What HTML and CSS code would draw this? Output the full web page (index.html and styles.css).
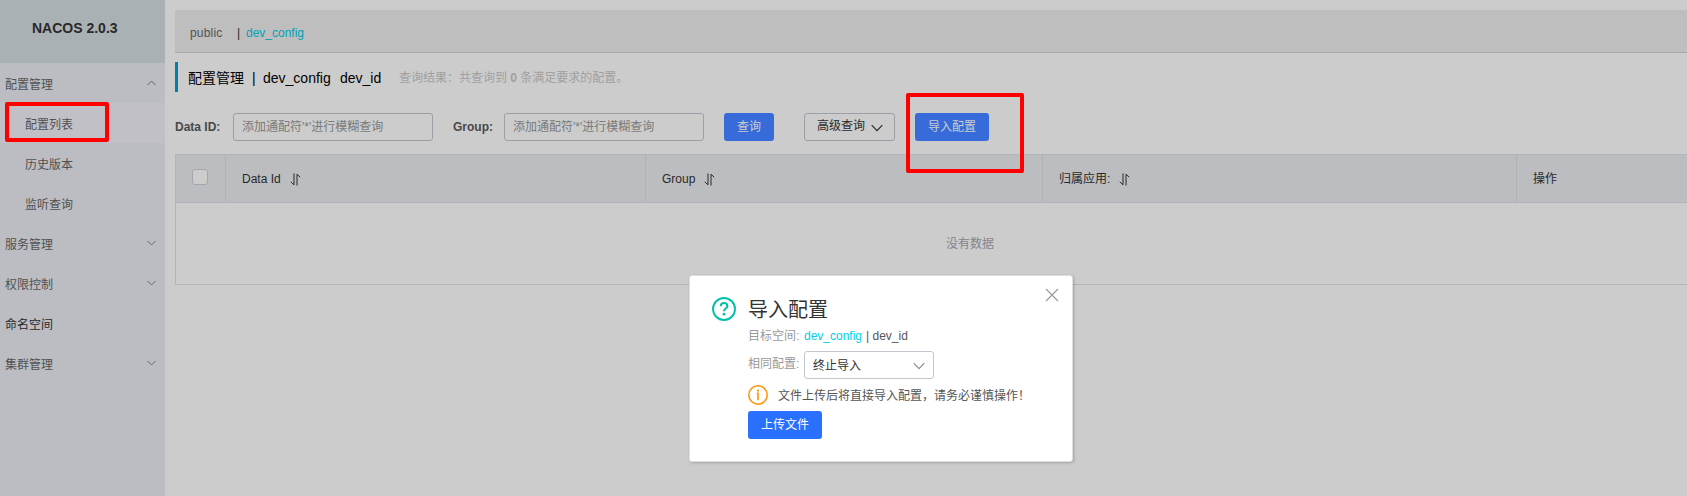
FILE: index.html
```html
<!DOCTYPE html>
<html lang="zh-CN">
<head>
<meta charset="utf-8">
<title>Nacos</title>
<link rel="stylesheet" href="styles.css">
</head>
<body>
<svg class="defs" width="0" height="0">
  <symbol id="chevron" viewBox="0 0 12 7"><path d="M0.7 0.7 6 6.1 11.3 0.7" fill="none" stroke="currentColor" stroke-width="1.2"/></symbol>
  <symbol id="sort" viewBox="0 0 11 13"><path d="M4 0.5V11.8L0.8 8.8M7 12.5V1.2L10.2 4.2" fill="none" stroke="currentColor" stroke-width="1"/></symbol>
</svg>
<div class="app">
  <aside class="sidebar">
    <h1 class="brand">NACOS 2.0.3</h1>
    <nav class="menu">
      <div class="item">配置管理<svg class="arrow up"><use href="#chevron"/></svg></div>
      <div class="item sub active">配置列表<span class="mark mark-list"></span></div>
      <div class="item sub">历史版本</div>
      <div class="item sub">监听查询</div>
      <div class="item">服务管理<svg class="arrow"><use href="#chevron"/></svg></div>
      <div class="item">权限控制<svg class="arrow"><use href="#chevron"/></svg></div>
      <div class="item strong">命名空间</div>
      <div class="item">集群管理<svg class="arrow"><use href="#chevron"/></svg></div>
    </nav>
  </aside>
  <main class="main">
    <div class="spaces"><span class="public">public</span><span class="bar">|</span><span class="link">dev_config</span></div>
    <div class="title"><span class="t-name">配置管理</span><span class="t-bar">|</span><span class="t-space">dev_config</span><span class="t-id">dev_id</span><span class="result">查询结果：共查询到 <b>0</b> 条满足要求的配置。</span></div>
    <div class="form">
      <label class="label l-data">Data ID:</label>
      <div class="input">添加通配符'*'进行模糊查询</div>
      <label class="label l-group">Group:</label>
      <div class="input">添加通配符'*'进行模糊查询</div>
      <div class="btn primary search">查询</div>
      <div class="btn normal">高级查询<svg class="btn-arrow"><use href="#chevron"/></svg></div>
      <div class="btn primary import">导入配置<span class="mark mark-import"></span></div>
    </div>
    <div class="table">
      <div class="thead">
        <div class="th check"><span class="checkbox"></span></div>
        <div class="th">Data Id<svg class="sort"><use href="#sort"/></svg></div>
        <div class="th">Group<svg class="sort"><use href="#sort"/></svg></div>
        <div class="th">归属应用:<svg class="sort"><use href="#sort"/></svg></div>
        <div class="th">操作</div>
      </div>
      <div class="empty">没有数据</div>
    </div>
  </main>
</div>
<section class="dialog">
  <svg class="close" viewBox="0 0 14 14"><path d="M1 1 13 13M13 1 1 13" stroke="#999" stroke-width="1.1"/></svg>
  <svg class="help" viewBox="0 0 24 24" fill="none" stroke="#00c1a8"><circle cx="12" cy="12" r="11" stroke-width="1.9"/><path d="M8.7 9.2C8.8 7 10.1 6 12 6c2 0 3.4 1.2 3.4 3 0 2.4-3.4 2.6-3.4 5.2" stroke-width="2"/><circle cx="12" cy="17.2" r="1.4" fill="#00c1a8" stroke="none"/></svg>
  <div class="body">
    <h2 class="heading">导入配置</h2>
    <div class="row target"><span class="key">目标空间:</span><span class="space">dev_config</span><span class="id">| dev_id</span></div>
    <div class="row policy"><span class="key">相同配置:</span><div class="select">终止导入<svg class="sel-arrow"><use href="#chevron"/></svg></div></div>
    <div class="row notice"><svg class="info" viewBox="0 0 20 20"><circle cx="10" cy="10" r="9.2" fill="none" stroke="#ff9300" stroke-width="1.5"/><circle cx="10" cy="5.7" r="1.1" fill="#ff9300"/><path d="M8.8 8.4H10V15.2" fill="none" stroke="#ff9300" stroke-width="1.6"/></svg><span>文件上传后将直接导入配置，请务必谨慎操作！</span></div>
    <div class="btn upload">上传文件</div>
  </div>
</section>
</body>
</html>
```
FILE: styles.css
```css
* { box-sizing: border-box; }
body {
  margin: 0;
  height: 496px;
  overflow: hidden;
  background: #ccc;
  color: #292929;
  font: 12px/18px "Liberation Sans", "Noto Sans CJK SC", sans-serif;
}
.defs { position: absolute; }
.app { display: flex; height: 496px; }

.sidebar { width: 165px; flex: none; background: #bbbdc2; }
.brand {
  margin: 0;
  height: 63px;
  padding: 19px 0 0 32px;
  background: #aab1b5;
  font-size: 14px;
  font-weight: bold;
  white-space: nowrap;
}
.item {
  position: relative;
  display: flex;
  align-items: center;
  justify-content: space-between;
  height: 40px;
  padding: 4px 9px 0 5px;
  color: #515151;
}
.item.sub { padding-left: 25px; }
.item.active { background: #c1c0c7; }
.item.strong { color: #292929; }
.arrow { width: 9px; height: 6px; margin: -5px 0 0; color: #5c5c5c; }
.arrow.up { transform: scaleY(-1); }
.mark { position: absolute; border: 4px solid #f00; border-radius: 2px; }
.mark-list { left: 5px; top: -1px; width: 104px; height: 40px; }
.mark-import { left: -9px; top: -20px; width: 118px; height: 80px; }

.main { width: 1590px; flex: none; margin-left: 10px; padding-top: 10px; }
.spaces {
  display: flex;
  height: 43px;
  padding: 14px 0 0 15px;
  background: #bebebe;
  border-bottom: 1px solid #a8a8a8;
}
.public { width: 47px; color: #525252; letter-spacing: 0.2px; }
.bar { width: 9px; }
.link { color: #00a2b6; }
.title {
  display: flex;
  height: 30px;
  margin-top: 9px;
  border-left: 3px solid #0080a9;
  padding-left: 10px;
  color: #000;
  font-size: 14px;
  line-height: 33px;
  white-space: nowrap;
}
.t-name { width: 64px; }
.t-bar { width: 11px; }
.t-space { width: 77px; }
.t-id { width: 59px; }
.result { color: #a0a0a0; font-size: 12px; }

.form { display: flex; height: 28px; margin-top: 21px; line-height: 28px; white-space: nowrap; }
.label { flex: none; color: #484848; font-weight: bold; }
.l-data { width: 58px; }
.l-group { width: 51px; margin-left: 20px; }
.input {
  width: 200px;
  height: 28px;
  padding-left: 8px;
  border: 1px solid #9d9fa8;
  border-radius: 3px;
  color: #7a7a7a;
  line-height: 26px;
}
.btn { position: relative; height: 28px; border-radius: 3px; text-align: center; white-space: nowrap; }
.primary { background: #376bd9; color: #ccc; }
.search { width: 50px; margin-left: 20px; }
.normal {
  display: flex;
  gap: 6px;
  width: 91px;
  margin-left: 30px;
  padding-left: 12px;
  border: 1px solid #9d9fa8;
  line-height: 24px;
}
.btn-arrow { width: 12px; height: 8px; margin-top: 10px; }
.import { width: 74px; margin-left: 20px; }

.table { height: 131px; margin-top: 13px; border: 1px solid #b3b5b9; }
.thead {
  display: grid;
  grid-template-columns: 50px 420px 397px 474px 1fr;
  height: 48px;
  background: #bbbdc1;
  border-bottom: 1px solid #b0b2b6;
}
.th { display: flex; align-items: center; padding: 1px 0 0 16px; border-right: 1px solid #b0b2b6; }
.checkbox { width: 16px; height: 16px; margin-top: -4px; border: 1px solid #a3a5ad; border-radius: 3px; background: #ccc; }
.sort { width: 11px; height: 13px; margin-left: 9px; }
.empty { padding-top: 32px; text-align: center; color: #84858c; }

.dialog {
  position: absolute;
  left: 689px;
  top: 275px;
  width: 384px;
  height: 187px;
  padding: 20px 0 0 22px;
  display: flex;
  background: #fff;
  border: 1px solid #dcdee3;
  border-radius: 3px;
  box-shadow: 1px 1px 3px rgba(0,0,0,.2);
  white-space: nowrap;
}
.close { position: absolute; left: 355px; top: 12px; width: 14px; height: 14px; }
.help { width: 24px; height: 24px; margin-top: 1px; }
.body { margin-left: 12px; }
.heading { height: 27px; margin: 0; color: #333; font-size: 20px; font-weight: normal; line-height: 29px; }
.row { display: flex; }
.target { height: 28px; line-height: 26px; }
.key { width: 56px; color: #999; }
.space { width: 62px; color: #00d0e6; }
.id { color: #555; }
.policy .key { line-height: 27px; }
.select {
  display: flex;
  justify-content: space-between;
  width: 130px;
  height: 28px;
  padding: 0 8px 0 8px;
  border: 1px solid #c4c6cf;
  border-radius: 3px;
  color: #333;
  line-height: 28px;
}
.sel-arrow { width: 12px; height: 8px; margin-top: 10px; color: #8c8c8c; }
.notice { height: 32px; gap: 10px; color: #555; line-height: 34px; }
.info { width: 20px; height: 20px; margin-top: 6px; }
.upload { width: 74px; background: #2970ff; color: #fff; line-height: 29px; }
```
